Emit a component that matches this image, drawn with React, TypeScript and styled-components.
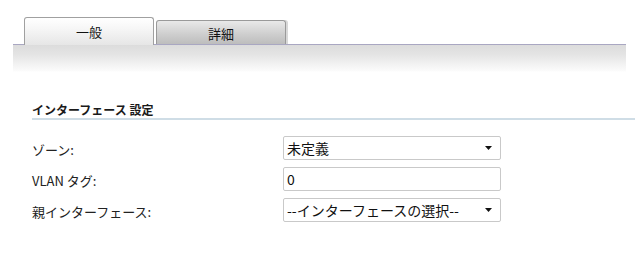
import React from "react";
import styled, { createGlobalStyle } from "styled-components";

const Global = createGlobalStyle`
  html, body { margin: 0; padding: 0; background: #fff; }
  body { font-family: "Noto Sans CJK JP", "DejaVu Sans", sans-serif; color: #222; }
`;

const Page = styled.div`
  width: 639px;
  height: 265px;
  overflow: hidden;
`;

const TabArea = styled.div`
  padding: 16px 13px 0 13px;
`;

const TabRow = styled.div`
  display: flex;
  align-items: flex-end;
  gap: 2px;
  padding-left: 11px;
  height: 28px;
`;

const Tab = styled.div<{ $active?: boolean }>`
  box-sizing: border-box;
  width: 130px;
  height: ${(p) => (p.$active ? "28px" : "24px")};
  border: 1px solid ${(p) => (p.$active ? "#a0a0a0" : "#9a9a9a")};
  border-bottom: none;
  border-radius: 3px 3px 0 0;
  background: ${(p) =>
    p.$active
      ? "linear-gradient(#ffffff, #f6f6f6 40%, #e6e6e6)"
      : "linear-gradient(#e9e9e9, #cdcdcd 60%, #bdbdbd)"};
  box-shadow: ${(p) => (p.$active ? "none" : "2px 0 0 #d8d8d8")};
  display: flex;
  align-items: center;
  justify-content: center;
  font-size: 13px;
  color: #111;
  padding-top: ${(p) => (p.$active ? "0" : "1px")};
  position: relative;
  z-index: ${(p) => (p.$active ? 2 : 1)};
  margin-bottom: ${(p) => (p.$active ? "-1px" : "0")};
`;

const Band = styled.div`
  width: 613px;
  height: 27px;
  border-top: 1px solid #a9a7c2;
  background: linear-gradient(#dcdcdc, #e4e4e4 35%, #fbfbfb 95%, #fff);
`;

const Section = styled.div`
  padding: 30px 4px 0 32px;
`;

const SectionTitle = styled.div`
  font-size: 12px;
  font-weight: bold;
  color: #1a1a1a;
  padding-bottom: 1px;
  border-bottom: 2px solid #cfdde6;
  line-height: 15px;
`;

const Form = styled.div`
  display: grid;
  grid-template-columns: 251px 218px;
  row-gap: 7px;
  margin-top: 16px;
  align-items: center;
`;

const Label = styled.div`
  font-size: 13px;
  color: #222;
  padding-top: 3px;
`;

const Field = styled.div`
  box-sizing: border-box;
  height: 24px;
  border: 1px solid #c9c9c9;
  border-radius: 2px;
  background: #fff;
  display: flex;
  align-items: center;
  justify-content: space-between;
  padding: 0 8px 0 3px;
  font-size: 14px;
  color: #111;
`;

const Arrow = styled.svg`
  width: 7px;
  height: 4px;
`;

const Caret = () => (
  <Arrow viewBox="0 0 7 4">
    <path d="M0 0 H7 L3.5 4 Z" fill="#111" />
  </Arrow>
);

export default function App() {
  return (
    <Page>
      <Global />
      <TabArea>
        <TabRow>
          <Tab $active>一般</Tab>
          <Tab>詳細</Tab>
        </TabRow>
        <Band />
      </TabArea>
      <Section>
        <SectionTitle>インターフェース 設定</SectionTitle>
        <Form>
          <Label>ゾーン:</Label>
          <Field>
            <span>未定義</span>
            <Caret />
          </Field>
          <Label>VLAN タグ:</Label>
          <Field>
            <span>0</span>
          </Field>
          <Label>親インターフェース:</Label>
          <Field>
            <span>--インターフェースの選択--</span>
            <Caret />
          </Field>
        </Form>
      </Section>
    </Page>
  );
}
